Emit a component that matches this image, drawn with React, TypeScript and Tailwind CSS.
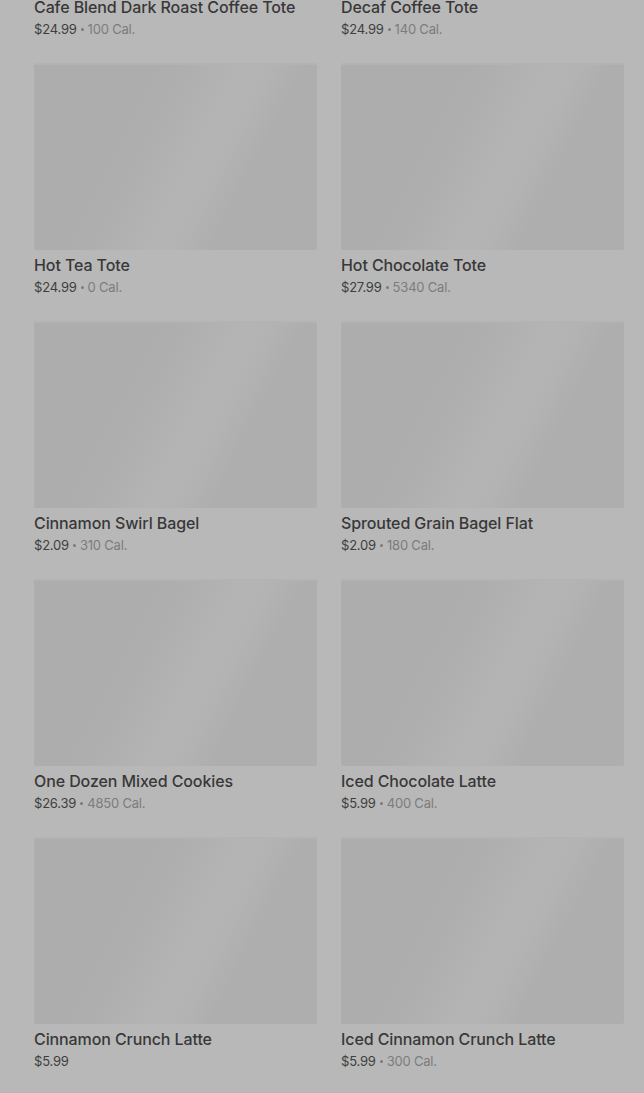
import React from "react";

type Item = { name: string; price: string; cal?: string };

const items: Item[] = [
  { name: "Cafe Blend Dark Roast Coffee Tote", price: "$24.99", cal: "100 Cal." },
  { name: "Decaf Coffee Tote", price: "$24.99", cal: "140 Cal." },
  { name: "Hot Tea Tote", price: "$24.99", cal: "0 Cal." },
  { name: "Hot Chocolate Tote", price: "$27.99", cal: "5340 Cal." },
  { name: "Cinnamon Swirl Bagel", price: "$2.09", cal: "310 Cal." },
  { name: "Sprouted Grain Bagel Flat", price: "$2.09", cal: "180 Cal." },
  { name: "One Dozen Mixed Cookies", price: "$26.39", cal: "4850 Cal." },
  { name: "Iced Chocolate Latte", price: "$5.99", cal: "400 Cal." },
  { name: "Cinnamon Crunch Latte", price: "$5.99" },
  { name: "Iced Cinnamon Crunch Latte", price: "$5.99", cal: "300 Cal." },
];

function Card({ item }: { item: Item }) {
  return (
    <div className="flex flex-col">
      <div className="h-[187px] w-full rounded-[2px] border-t-2 border-[#b3b3b3] bg-[linear-gradient(117deg,#adadad_34%,#b0b0b0_44%,#b4b4b4_56%,#b3b3b3_63%,#aeaeae_72%)]" />
      <div className="mt-[5px] h-5 text-[16px] leading-5 font-medium text-[#383838] tracking-[-0.1px]">
        {item.name}
      </div>
      <div className="mt-[4px] flex h-4 items-center text-[13px] leading-4 text-[#3e3e3e] tracking-[-0.2px]">
        <span>{item.price}</span>
        {item.cal && (
          <>
            <span className="mx-[4px] mt-[1px] inline-block h-[3px] w-[3px] rounded-full bg-[#7a7a7a]" />
            <span className="text-[#7c7c7c]">{item.cal}</span>
          </>
        )}
      </div>
    </div>
  );
}

export default function App() {
  return (
    <div
      className="h-[1093px] w-[644px] overflow-hidden bg-[#b8b8b8]"
      style={{ fontFamily: "Inter, 'Noto Sans', sans-serif" }}
    >
      <div className="-mt-[195px] grid grid-cols-2 gap-x-6 gap-y-[26px] pl-[34px] pr-[20px]">
        {items.map((it) => (
          <Card key={it.name} item={it} />
        ))}
      </div>
    </div>
  );
}
